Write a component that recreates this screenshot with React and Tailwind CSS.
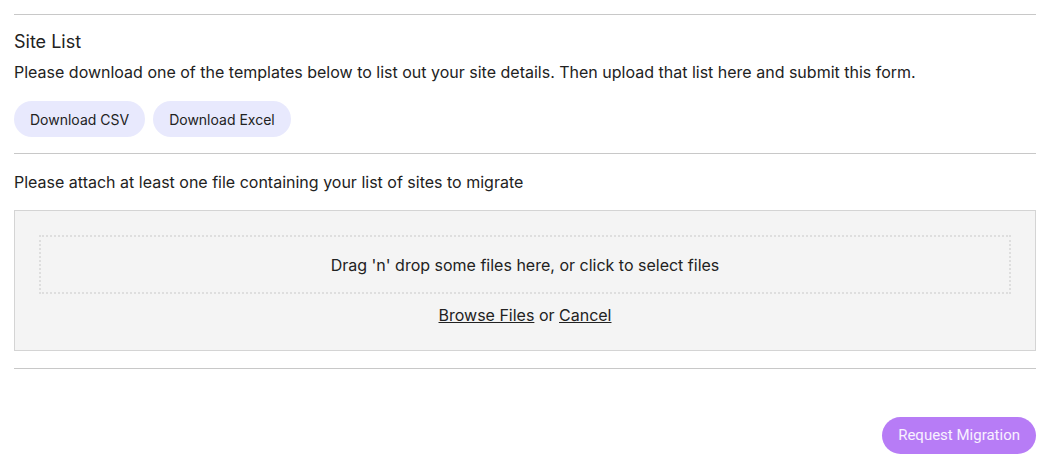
export default function App() {
    return (
        <div className="min-h-screen bg-white pl-[14px] pr-[18px] pt-[14px] text-[#222] font-['Inter',sans-serif]">
            <hr className="border-t border-[#c8c8c8]" />

            {/* Site list */}
            <section className="pt-[16px] pb-[16px]">
                <h2 className="text-[18px] leading-[22px] font-normal">Site List</h2>
                <p className="mt-[7px] text-[16px] leading-[24px]">
                    Please download one of the templates below to list out your site details. Then upload that list here and submit this form.
                </p>
                <div className="mt-[17px] flex gap-2">
                    <button className="h-[36px] px-4 rounded-full bg-[#e8e9fd] text-[14px]">Download CSV</button>
                    <button className="h-[36px] px-4 rounded-full bg-[#e8e9fd] text-[14px]">Download Excel</button>
                </div>
            </section>

            <hr className="border-t border-[#c8c8c8]" />

            {/* Attachments */}
            <section className="pt-[16px] pb-[17px]">
                <p className="text-[16px] leading-[24px]">Please attach at least one file containing your list of sites to migrate</p>
                <div className="mt-[16px] border border-[#d4d4d4] bg-[#f4f4f4] px-[24px] pt-[24px] pb-[24px]">
                    <div className="h-[59px] border-2 border-dotted border-[#dedede] flex items-center justify-center text-[16px]">
                        Drag 'n' drop some files here, or click to select files
                    </div>
                    <div className="mt-[10px] text-center text-[16px] leading-[22px]">
                        <button className="underline">Browse Files</button> or <button className="underline">Cancel</button>
                    </div>
                </div>
            </section>

            <hr className="border-t border-[#c8c8c8]" />

            <div className="flex justify-end pt-[48px]">
                <button className="h-[37px] px-4 rounded-full bg-[#b77cf6] text-white/90 text-[15px] font-['Roboto',sans-serif]">
                    Request Migration
                </button>
            </div>
        </div>
    );
}
